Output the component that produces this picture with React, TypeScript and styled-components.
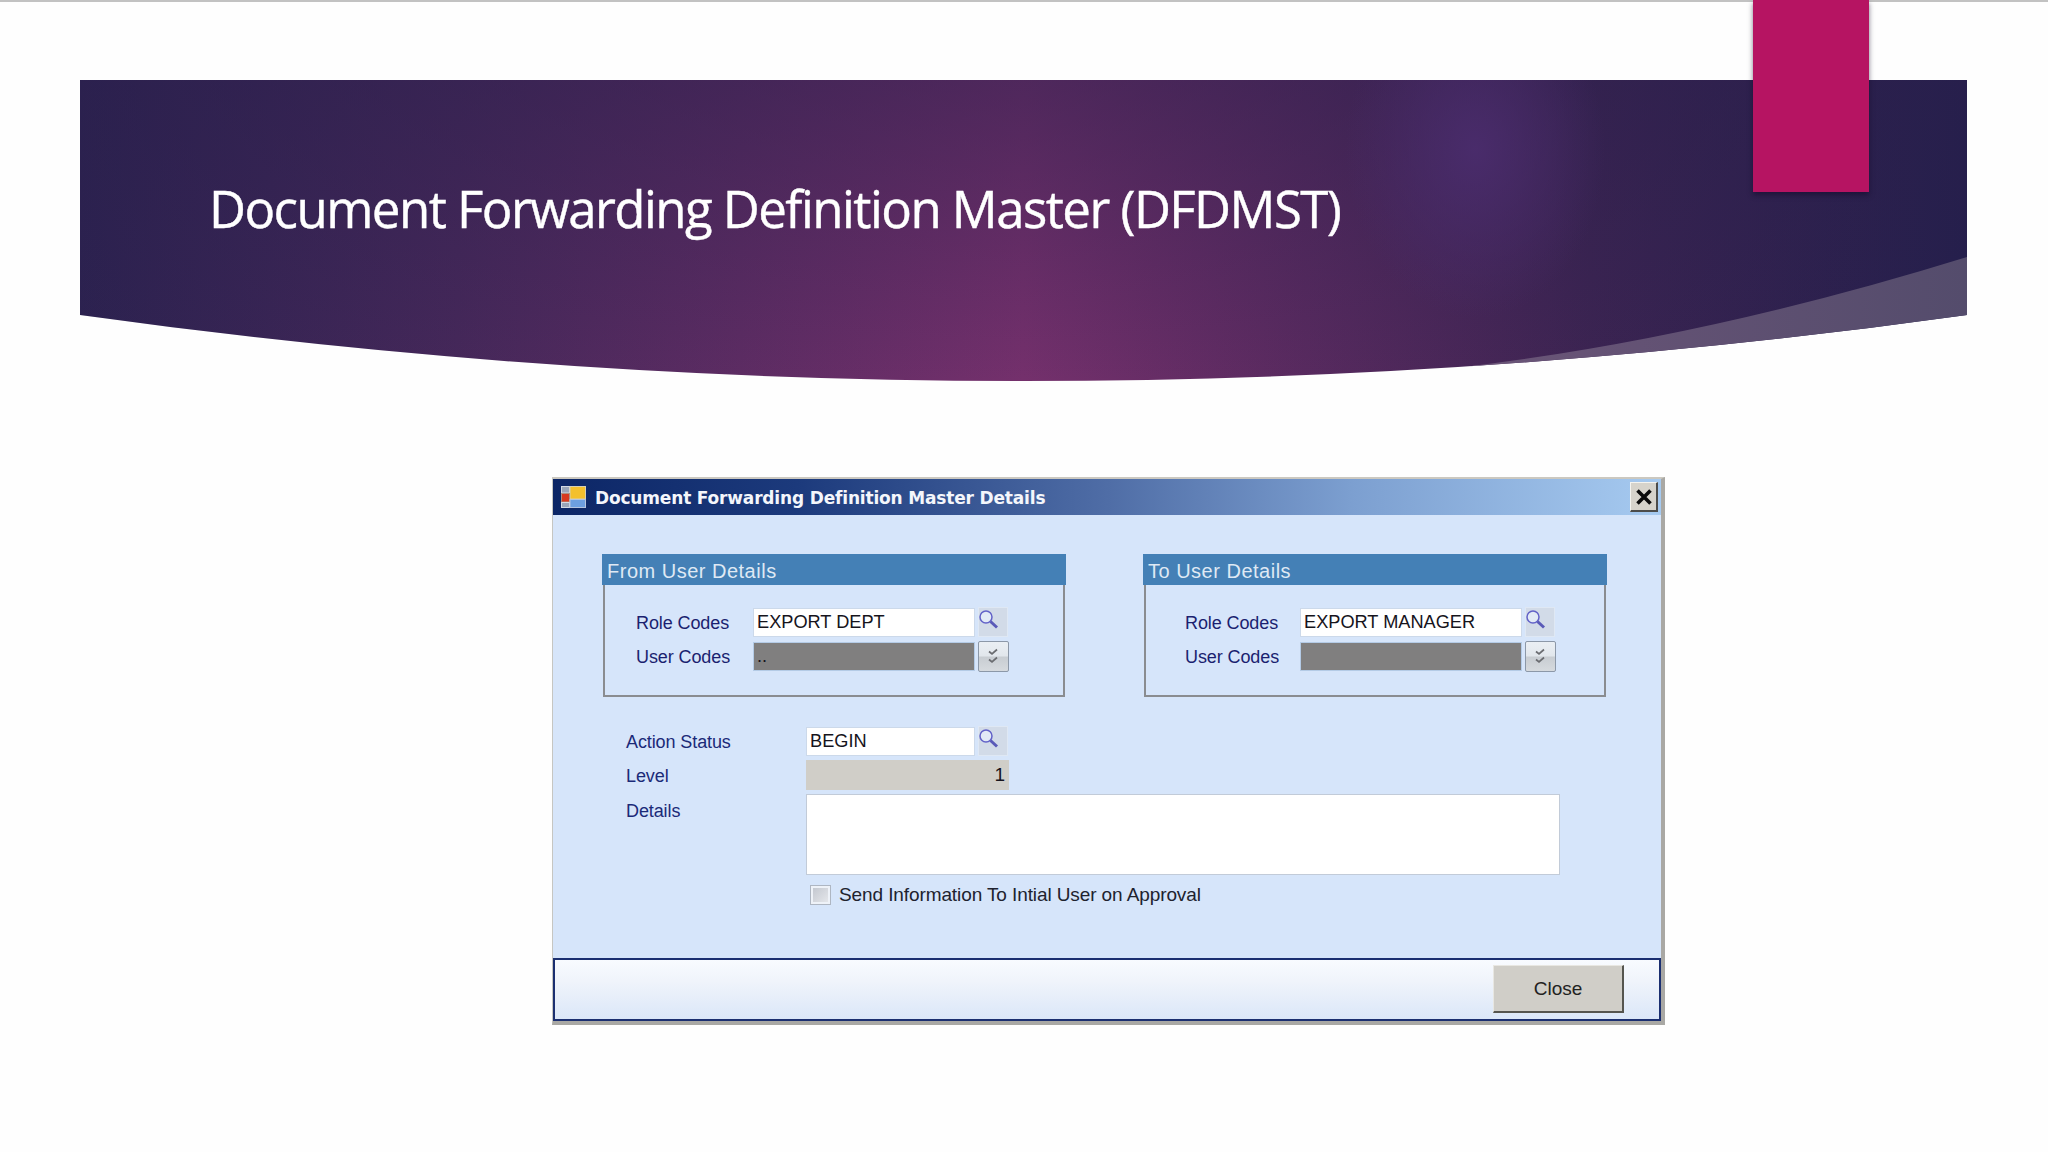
import styled, { createGlobalStyle } from 'styled-components'

const GlobalStyle = createGlobalStyle`
  html, body {
    margin: 0;
    padding: 0;
    background: #fefefe;
  }
  * {
    box-sizing: border-box;
  }
`

const Slide = styled.div`
  width: 2048px;
  height: 1152px;
  overflow: hidden;
  position: relative;
  background: #fefefe;
  font-family: 'Liberation Sans', Arial, sans-serif;
`

const TopRule = styled.div`
  height: 2px;
  margin-bottom: 78px;
  background: #c2c2c2;
`

const Banner = styled.header`
  position: relative;
  width: 1887px;
  height: 301px;
  margin-left: 80px;
  padding: 96px 0 0 129px;
`

const BannerShape = styled.svg`
  position: absolute;
  top: 0;
  left: 0;
`

const Title = styled.h1`
  position: relative;
  margin: 0;
  font-family: 'Open Sans', sans-serif;
  font-weight: 400;
  font-size: 51px;
  line-height: 64px;
  letter-spacing: -1.55px;
  color: #ffffff;
  -webkit-text-stroke: 0.4px #ffffff;
  white-space: nowrap;
`

const Ribbon = styled.div`
  position: absolute;
  top: -80px;
  left: 1673px;
  width: 116px;
  height: 192px;
  background: #b61462;
  box-shadow: 0 3px 5px rgba(20, 10, 40, 0.55);
`

const Dialog = styled.section`
  display: flex;
  flex-direction: column;
  width: 1113px;
  height: 548px;
  margin: 96px 0 0 552px;
  background: #d6e5fa;
  border-top: 2px solid #cbc8c0;
  border-left: 1px solid #c6c6c2;
  border-right: 4px solid #a9a8a4;
  border-bottom: 4px solid #a9a8a4;
`

const TitleBar = styled.div`
  display: flex;
  align-items: center;
  height: 36px;
  flex-shrink: 0;
  padding: 0 3px 0 8px;
  background: linear-gradient(90deg, #0c2666 0%, #1c3a7c 22%, #4f6da6 50%, #7c9fd0 72%, #a6caf0 100%);
`

const TitleText = styled.div`
  flex: 1;
  margin-left: 9px;
  padding-top: 1px;
  font-family: 'DejaVu Sans', sans-serif;
  font-weight: 700;
  font-size: 17px;
  letter-spacing: -0.17px;
  color: #f4f6fb;
  white-space: nowrap;
`

const CloseBox = styled.div`
  display: flex;
  align-items: center;
  justify-content: center;
  width: 28px;
  height: 30px;
  margin-left: -1px;
  background: #d6d3cb;
  border-top: 1px solid #f4f4f0;
  border-left: 1px solid #f4f4f0;
  border-right: 2px solid #4c4c4a;
  border-bottom: 2px solid #4c4c4a;
`

const PanelRow = styled.div`
  display: flex;
  gap: 77px;
  padding: 39px 0 0 49px;
`

const Panel = styled.div`
  width: 464px;
`

const PanelHeader = styled.div`
  height: 31px;
  padding: 3px 0 0 5px;
  background: #4480b6;
  font-size: 20px;
  line-height: 28px;
  letter-spacing: 0.5px;
  color: #dfe9f4;
`

const PanelBody = styled.div`
  display: flex;
  flex-direction: column;
  gap: 4px;
  width: 462px;
  height: 112px;
  margin-left: 1px;
  padding: 22px 0 0 ${props => props.$indent}px;
  border: 2px solid #8a8c90;
  border-top: none;
`

const FieldRow = styled.div`
  display: flex;
  align-items: center;
  gap: 3px;
`

const RowLabel = styled.label`
  width: ${props => props.$width}px;
  padding-top: 2px;
  font-size: 18px;
  letter-spacing: -0.1px;
  color: #1b1f70;
`

const TextBox = styled.div`
  display: flex;
  align-items: center;
  width: ${props => props.$width}px;
  height: 29px;
  padding-left: 3px;
  background: ${props => (props.$disabled ? '#807f7f' : '#ffffff')};
  border: 1px solid ${props => (props.$disabled ? '#b4cbe6' : '#ccd9ea')};
  font-size: 18.2px;
  color: #16141c;
  white-space: nowrap;
`

const LookupButton = styled.div`
  display: flex;
  align-items: center;
  justify-content: center;
  width: 30px;
  height: 30px;
  background: #d2dbe8;
  border: 1px solid #dfe8f4;
`

const DropButton = styled.div`
  display: flex;
  align-items: center;
  justify-content: center;
  width: 31px;
  height: 31px;
  background: linear-gradient(180deg, #eaeff4 0%, #e2e7ec 48%, #c8cdd2 52%, #d6dade 100%);
  border: 1px solid #8c98a8;
  border-radius: 2px;
`

const FormGrid = styled.div`
  display: grid;
  grid-template-columns: 180px 754px;
  grid-template-rows: 30px 30px 81px 20px;
  row-gap: 4px;
  margin: 29px 0 0 73px;
`

const FormLabel = styled.label`
  padding-top: ${props => props.$top ?? 4}px;
  font-size: 18px;
  letter-spacing: -0.1px;
  line-height: 24px;
  color: #1b2a78;
`

const LevelBox = styled.div`
  width: 203px;
  height: 30px;
  padding-right: 4px;
  background: #d0cec8;
  font-size: 19px;
  line-height: 29px;
  text-align: right;
  color: #16141c;
`

const DetailsBox = styled.div`
  background: #ffffff;
  border: 1px solid #c2cbd8;
`

const CheckRow = styled.div`
  grid-column: 2;
  display: flex;
  align-items: center;
  gap: 8px;
  margin-top: 11px;
  padding-left: 4px;
  font-size: 19px;
  letter-spacing: -0.1px;
  color: #20222e;
  white-space: nowrap;
`

const CheckBox = styled.span`
  width: 21px;
  height: 20px;
  background: linear-gradient(135deg, #c4c8d0 0%, #e4e6ea 100%);
  border: 3px solid #eef2f8;
  outline: 1px solid #aeb6c2;
  outline-offset: -1px;
`

const Footer = styled.footer`
  display: flex;
  align-items: center;
  justify-content: flex-end;
  height: 63px;
  margin-top: auto;
  padding-right: 35px;
  background: linear-gradient(180deg, #f8fbff 0%, #f0f4fb 35%, #dbe7f8 100%);
  border: 2px solid #1b2f70;
`

const CloseButton = styled.button`
  width: 131px;
  height: 48px;
  margin-bottom: 2px;
  padding: 2px 0 0;
  background: #d0cec8;
  border-top: 1px solid #e8e7e2;
  border-left: 1px solid #e8e7e2;
  border-right: 2px solid #55554f;
  border-bottom: 2px solid #55554f;
  font-family: inherit;
  font-size: 19px;
  color: #22221f;
`

const AppIcon = () => (
  <svg width="25" height="22" viewBox="0 0 25 22">
    <rect x="0.5" y="0.5" width="8" height="6.5" fill="#9aa6ba" stroke="#d4dae4" />
    <rect x="9" y="0.5" width="15.5" height="12.5" fill="#f3c02e" stroke="#d8d0b0" />
    <rect x="0.5" y="7.5" width="8" height="8.5" fill="#d83a20" stroke="#b09080" />
    <rect x="0.5" y="16.5" width="8" height="5" fill="#9aa6ba" stroke="#d4dae4" />
    <rect x="9" y="13.5" width="15.5" height="8" fill="#6d9fe0" stroke="#b4c4e0" />
  </svg>
)

const CloseGlyph = () => (
  <svg width="18" height="18" viewBox="0 0 18 18">
    <path d="M2.5 2.5 L15.5 15.5 M15.5 2.5 L2.5 15.5" stroke="#0a0a0a" strokeWidth="3.6" />
  </svg>
)

const SearchGlyph = () => (
  <svg width="22" height="22" viewBox="0 0 22 22" style={{ margin: '-5px 0 0 -8px' }}>
    <circle cx="8" cy="8" r="6" fill="#e2eaf6" stroke="#6262c8" strokeWidth="1.5" />
    <path d="M12.5 12.5 L19 18.5" stroke="#5a5ab8" strokeWidth="3" />
  </svg>
)

const DoubleCheck = () => (
  <svg width="12" height="17" viewBox="0 0 12 17" style={{ marginLeft: -2 }}>
    <path d="M2 3.5 L5 6 L10 1.5 M2 11.5 L5 14 L10 9.5" fill="none" stroke="#6a6c70" strokeWidth="1.7" />
  </svg>
)

const UserPanel = ({ title, role, user, indent, labelWidth }: { title: string; role: string; user: string; indent: number; labelWidth: number }) => (
  <Panel>
    <PanelHeader>{title}</PanelHeader>
    <PanelBody $indent={indent}>
      <FieldRow>
        <RowLabel $width={labelWidth}>Role Codes</RowLabel>
        <TextBox $width={222}>{role}</TextBox>
        <LookupButton><SearchGlyph /></LookupButton>
      </FieldRow>
      <FieldRow>
        <RowLabel $width={labelWidth}>User Codes</RowLabel>
        <TextBox $width={222} $disabled>{user}</TextBox>
        <DropButton><DoubleCheck /></DropButton>
      </FieldRow>
    </PanelBody>
  </Panel>
)

const App = () => {
  return (
    <Slide>
      <GlobalStyle />
      <TopRule />
      <Banner>
        <BannerShape width="1887" height="301" viewBox="0 0 1887 301">
          <defs>
            <linearGradient id="bannerSides" x1="0" x2="1" y1="0" y2="0">
              <stop offset="0" stopColor="#2c2250" />
              <stop offset="0.2" stopColor="#46285a" />
              <stop offset="0.5" stopColor="#74306c" />
              <stop offset="0.8" stopColor="#3c2452" />
              <stop offset="1" stopColor="#241f4c" />
            </linearGradient>
            <linearGradient id="bannerFade" x1="0" x2="0" y1="0" y2="1">
              <stop offset="0" stopColor="#2a1f4c" stopOpacity="0.5" />
              <stop offset="1" stopColor="#2a1f4c" stopOpacity="0" />
            </linearGradient>
            <radialGradient id="bannerGlow" gradientUnits="userSpaceOnUse" cx="0" cy="0" r="130" gradientTransform="translate(1395 70) scale(1 1.3)">
              <stop offset="0" stopColor="#4a2c6c" stopOpacity="0.95" />
              <stop offset="1" stopColor="#4a2c6c" stopOpacity="0" />
            </radialGradient>
            <linearGradient id="sliverFill" x1="0" x2="1" y1="0" y2="0">
              <stop offset="0" stopColor="#6b5578" />
              <stop offset="1" stopColor="#544c6c" />
            </linearGradient>
          </defs>
          <path d="M0 0 H1887 V235 Q944 367 0 235 Z" fill="url(#bannerSides)" />
          <path d="M0 0 H1887 V235 Q944 367 0 235 Z" fill="url(#bannerFade)" />
          <path d="M0 0 H1887 V235 Q944 367 0 235 Z" fill="url(#bannerGlow)" />
          <path d="M1390 286.2 Q1627 257.7 1887 177 V235 Q1638.6 269.8 1390 286.2 Z" fill="url(#sliverFill)" />
        </BannerShape>
        <Title>Document Forwarding Definition Master (DFDMST)</Title>
        <Ribbon />
      </Banner>
      <Dialog>
        <TitleBar>
          <AppIcon />
          <TitleText>Document Forwarding Definition Master Details</TitleText>
          <CloseBox><CloseGlyph /></CloseBox>
        </TitleBar>
        <PanelRow>
          <UserPanel title="From User Details" role="EXPORT DEPT" user=".." indent={31} labelWidth={114} />
          <UserPanel title="To User Details" role="EXPORT MANAGER" user="" indent={39} labelWidth={112} />
        </PanelRow>
        <FormGrid>
          <FormLabel>Action Status</FormLabel>
          <FieldRow>
            <TextBox $width={169}>BEGIN</TextBox>
            <LookupButton><SearchGlyph /></LookupButton>
          </FieldRow>
          <FormLabel>Level</FormLabel>
          <LevelBox>1</LevelBox>
          <FormLabel $top={5}>Details</FormLabel>
          <DetailsBox />
          <CheckRow>
            <CheckBox />
            Send Information To Intial User on Approval
          </CheckRow>
        </FormGrid>
        <Footer>
          <CloseButton>Close</CloseButton>
        </Footer>
      </Dialog>
    </Slide>
  )
}

export default App
